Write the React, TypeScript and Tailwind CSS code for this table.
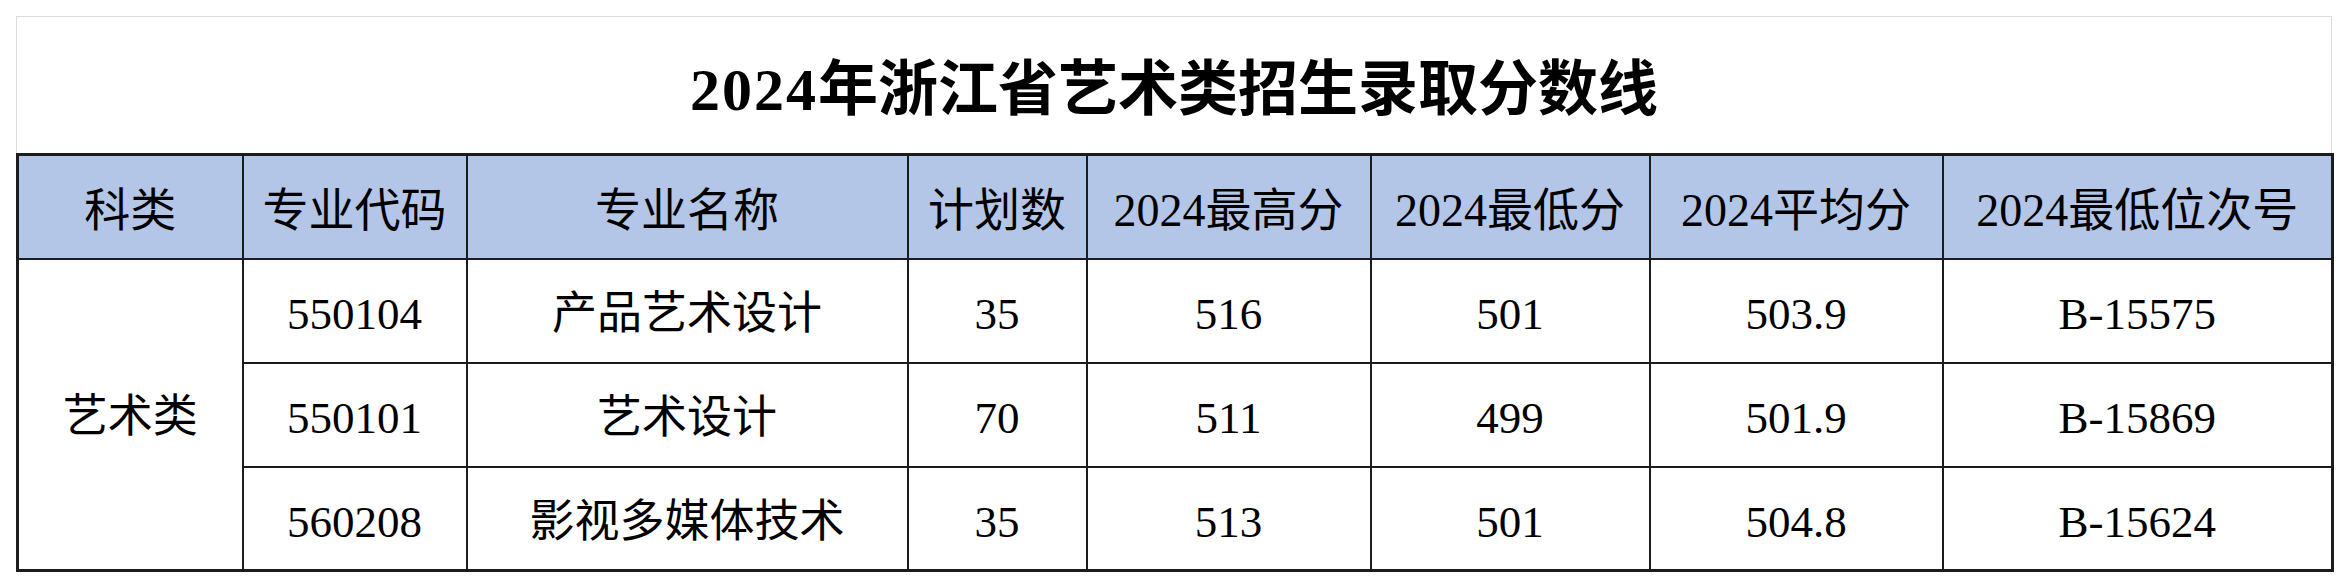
const columns = [
  { label: "科类", width: "w-[225px]" },
  { label: "专业代码", width: "w-[224px]" },
  { label: "专业名称", width: "w-[441px]" },
  { label: "计划数", width: "w-[179px]" },
  { label: "2024最高分", width: "w-[284px]" },
  { label: "2024最低分", width: "w-[279px]" },
  { label: "2024平均分", width: "w-[293px]" },
  { label: "2024最低位次号", width: "w-[390px]" },
];

const rows = [
  { code: "550104", name: "产品艺术设计", plan: "35", max: "516", min: "501", avg: "503.9", rank: "B-15575" },
  { code: "550101", name: "艺术设计", plan: "70", max: "511", min: "499", avg: "501.9", rank: "B-15869" },
  { code: "560208", name: "影视多媒体技术", plan: "35", max: "513", min: "501", avg: "504.8", rank: "B-15624" },
];

const font = "font-['Liberation_Serif','Noto_Sans_CJK_SC',serif]";
const cell = "border-2 border-[#1c1c1c] text-center align-middle p-0";

export default function App() {
  return (
    <div className={`w-[2348px] h-[585px] bg-white pt-[16px] pl-[16px] text-black ${font}`}>
      <div className="w-[2316px]">
        <div className="h-[137px] border border-b-0 border-[#dcdcdc] flex items-center justify-center pt-[10px]">
          <h1 className="text-[60px] font-bold leading-none">
            <span className="tracking-[2px]">2024</span>年浙江省艺术类招生录取分数线
          </h1>
        </div>
        <table className="table-fixed border-collapse w-[2316px] border-[3px] border-[#1c1c1c]">
          <colgroup>
            {columns.map((c) => (
              <col key={c.label} className={c.width} />
            ))}
          </colgroup>
          <thead>
            <tr className="h-[104px] bg-[#b4c6e7]">
              {columns.map((c) => (
                <th key={c.label} className={`${cell} text-[46px] font-normal leading-none pt-[8px]`}>
                  {c.label}
                </th>
              ))}
            </tr>
          </thead>
          <tbody className="text-[45px] leading-none">
            {rows.map((r, i) => (
              <tr key={r.code} className="h-[104px]">
                {i === 0 && (
                  <td rowSpan={3} className={`${cell} pt-[6px]`}>
                    艺术类
                  </td>
                )}
                <td className={`${cell} pt-[8px]`}>{r.code}</td>
                <td className={`${cell} pt-[8px]`}>{r.name}</td>
                <td className={`${cell} pt-[8px]`}>{r.plan}</td>
                <td className={`${cell} pt-[8px]`}>{r.max}</td>
                <td className={`${cell} pt-[8px]`}>{r.min}</td>
                <td className={`${cell} pt-[8px]`}>{r.avg}</td>
                <td className={`${cell} pt-[8px]`}>{r.rank}</td>
              </tr>
            ))}
          </tbody>
        </table>
      </div>
    </div>
  );
}
